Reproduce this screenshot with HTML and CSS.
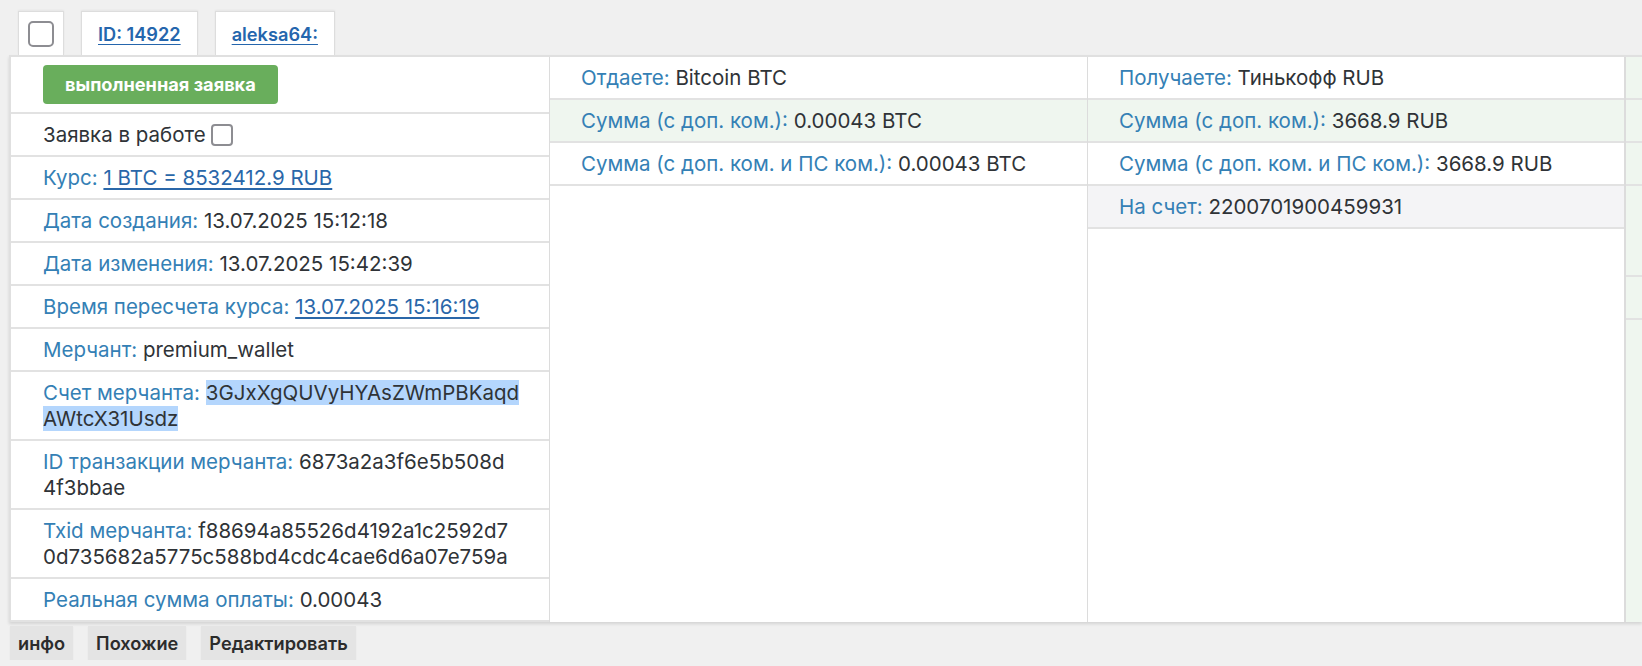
FILE: index.html
```html
<!DOCTYPE html>
<html lang="ru">
<head>
<meta charset="utf-8">
<title>Заявка 14922</title>
<link rel="stylesheet" href="styles.css">
</head>
<body>
<div class="order">
  <div class="tabs">
    <div class="tab tab-check"><span class="checkbox"></span></div>
    <div class="tab"><a href="#" class="tab-link">ID: 14922</a></div>
    <div class="tab"><a href="#" class="tab-link">aleksa64:</a></div>
  </div>
  <div class="panel">
    <div class="col col-info">
      <div class="row row-status"><span class="status-btn">выполненная заявка</span></div>
      <div class="row"><span class="value">Заявка в работе</span> <span class="checkbox checkbox-sm"></span></div>
      <div class="row"><span class="label">Курс:</span> <a href="#" class="link">1 BTC = 8532412.9 RUB</a></div>
      <div class="row"><span class="label">Дата создания:</span> <span class="value">13.07.2025 15:12:18</span></div>
      <div class="row"><span class="label">Дата изменения:</span> <span class="value">13.07.2025 15:42:39</span></div>
      <div class="row"><span class="label">Время пересчета курса:</span> <a href="#" class="link">13.07.2025 15:16:19</a></div>
      <div class="row"><span class="label">Мерчант:</span> <span class="value">premium_wallet</span></div>
      <div class="row"><span class="label">Счет мерчанта:</span> <span class="value selected">3GJxXgQUVyHYAsZWmPBKaqd <br>AWtcX31Usdz</span></div>
      <div class="row"><span class="label">ID транзакции мерчанта:</span> <span class="value">6873a2a3f6e5b508d<br>4f3bbae</span></div>
      <div class="row"><span class="label">Txid мерчанта:</span> <span class="value">f88694a85526d4192a1c2592d7<br>0d735682a5775c588bd4cdc4cae6d6a07e759a</span></div>
      <div class="row"><span class="label">Реальная сумма оплаты:</span> <span class="value">0.00043</span></div>
    </div>
    <div class="col col-give">
      <div class="row"><span class="label">Отдаете:</span> <span class="value">Bitcoin BTC</span></div>
      <div class="row row-green"><span class="label">Сумма (с доп. ком.):</span> <span class="value">0.00043 BTC</span></div>
      <div class="row"><span class="label">Сумма (с доп. ком. и ПС ком.):</span> <span class="value">0.00043 BTC</span></div>
    </div>
    <div class="col col-get">
      <div class="row"><span class="label">Получаете:</span> <span class="value">Тинькофф RUB</span></div>
      <div class="row row-green"><span class="label">Сумма (с доп. ком.):</span> <span class="value">3668.9 RUB</span></div>
      <div class="row"><span class="label">Сумма (с доп. ком. и ПС ком.):</span> <span class="value">3668.9 RUB</span></div>
      <div class="row row-gray"><span class="label">На счет:</span> <span class="value">2200701900459931</span></div>
    </div>
    <div class="col col-extra">
      <div class="row">&nbsp;</div>
      <div class="row">&nbsp;</div>
      <div class="row">&nbsp;</div>
      <div class="row row-tall">&nbsp;</div>
      <div class="row">&nbsp;</div>
    </div>
  </div>
  <div class="actions">
    <a href="#" class="action">инфо</a>
    <a href="#" class="action">Похожие</a>
    <a href="#" class="action">Редактировать</a>
  </div>
</div>
</body>
</html>
```

FILE: styles.css
```css
* { box-sizing: border-box; }

html, body {
  margin: 0;
  background: #f0f0f0;
  font-family: Inter, "Noto Sans", "Liberation Sans", sans-serif;
  font-size: 20.5px;
  color: #2f3337;
  overflow: hidden;
}

.order {
  padding: 11px 0 0 9px;
}

.tabs {
  display: flex;
  gap: 17px;
  margin-left: 9px;
}

.tab {
  height: 44px;
  display: flex;
  align-items: center;
  padding: 0 16px;
  background: #fff;
  border: 1px solid #dddddd;
  border-bottom: none;
  box-shadow: 0 -1px 2px rgba(0, 0, 0, 0.05);
}

.tab-check {
  padding: 0 9px;
}

.tab-link {
  color: #2566ad;
  font-size: 18.2px;
  font-weight: 600;
  text-decoration: underline;
  text-underline-offset: 3px;
}

.checkbox {
  display: inline-block;
  width: 26px;
  height: 26px;
  border: 2px solid #8d8d92;
  border-radius: 5px;
  background: #fff;
}

.checkbox-sm {
  width: 22px;
  height: 22px;
  border-radius: 4px;
  vertical-align: -4px;
}

.panel {
  display: flex;
  background: #fff;
  border-top: 2px solid #e0e0e0;
  border-left: 2px solid #e0e0e0;
  box-shadow: 0 2px 3px rgba(0, 0, 0, 0.12);
  overflow: hidden;
}

.col {
  flex: 0 0 auto;
  background: #fff;
}

.col-info { width: 538px; }

.col-give {
  width: 538px;
  border-left: 1px solid #dcdcdc;
}

.col-get {
  width: 537px;
  border-left: 1px solid #dcdcdc;
}

.col-extra {
  width: 538px;
  border-left: 2px solid #dcdcdc;
  background: #eff6ef;
}

.row {
  padding: 8px 10px 7px 32px;
  line-height: 26px;
  border-bottom: 2px solid #e2e2e2;
}

.col-give .row,
.col-get .row,
.col-extra .row {
  padding-left: 31px;
}

.row-status {
  padding-top: 8px;
  padding-bottom: 8px;
  line-height: 39px;
}

.row-green { background: #eff6ef; }
.row-gray { background: #f4f4f6; }
.row-tall { min-height: 91px; }

.label { color: #3480b5; }
.value { color: #2f3337; }

.link {
  color: #2a67a9;
  text-decoration: underline;
  text-underline-offset: 3px;
}

.selected { background: #b4d6fd; }

.status-btn {
  display: inline-block;
  height: 39px;
  padding: 0 22px;
  line-height: 39px;
  border-radius: 4px;
  background: #69ae5c;
  color: #fff;
  font-size: 18.2px;
  font-weight: 700;
  vertical-align: top;
}

.actions {
  display: flex;
  gap: 15px;
  margin: 4px 0 0 1px;
}

.action {
  height: 34px;
  padding: 0 8px;
  line-height: 34px;
  background: #e4e4e4;
  color: #2c2c2c;
  font-size: 18.2px;
  font-weight: 600;
  text-decoration: none;
  box-shadow: 0 1px 1px rgba(0, 0, 0, 0.08);
}
```
